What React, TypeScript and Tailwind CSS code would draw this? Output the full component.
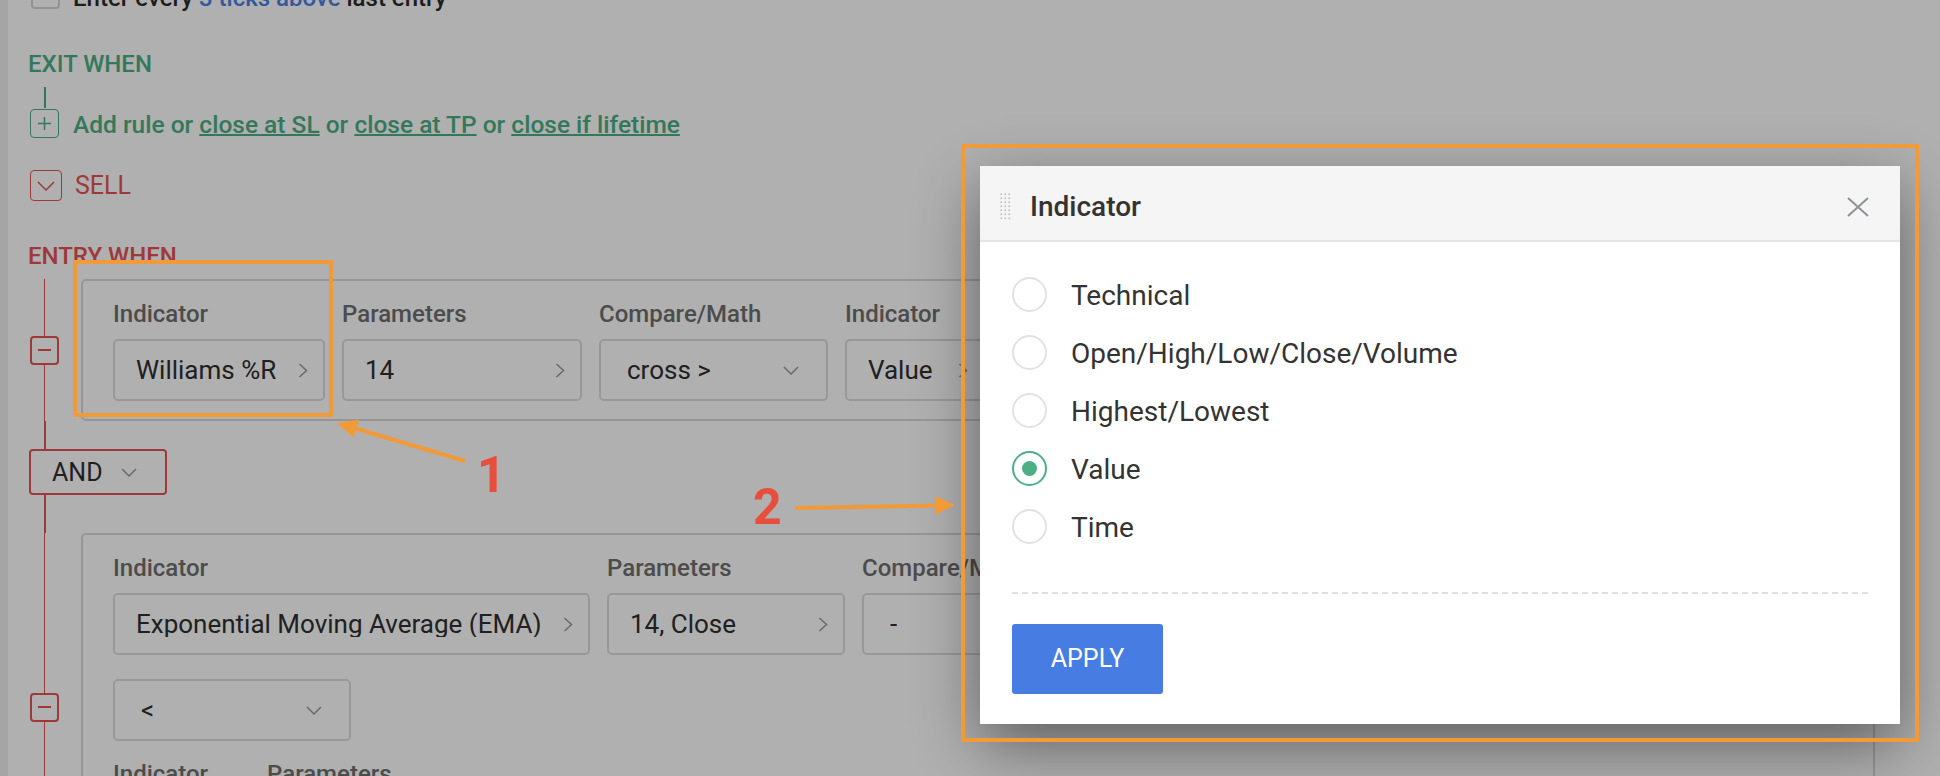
import React from "react";

type FieldProps = {
  label?: string;
  value: string;
  width: string;
  select?: boolean;
};

function ChevronRight() {
  return (
    <svg width="10" height="15" viewBox="0 0 10 15" fill="none">
      <path d="M1.5 1 8.5 7.5 1.5 14" stroke="#9a9a9a" strokeWidth="1.5" />
    </svg>
  );
}

function ChevronDown({ color = "#9a9a9a" }: { color?: string }) {
  return (
    <svg width="16" height="9" viewBox="0 0 16 9" fill="none">
      <path d="M1 1 8 8 15 1" stroke={color} strokeWidth="1.5" />
    </svg>
  );
}

function Field({ label, value, width, select }: FieldProps) {
  return (
    <div className={`flex flex-col ${width}`}>
      {label && (
        <span className="text-[24px] font-medium leading-[28px] text-[#6f6f6f]">
          {label}
        </span>
      )}
      <div
        className={`flex h-[62px] items-center justify-between rounded-[5px] border-2 border-[#dcdcdc] bg-white ${
          label ? "mt-[11px]" : ""
        } ${select ? "pl-[26px] pr-[27px]" : "pl-[21px] pr-[15px]"}`}
      >
        <span className="truncate text-[26px] leading-none text-[#2f2f2f]">{value}</span>
        {select ? <ChevronDown /> : <ChevronRight />}
      </div>
    </div>
  );
}

function MinusBox() {
  return (
    <div className="flex h-[29px] w-[29px] shrink-0 items-center justify-center rounded-[4px] border-2 border-[#e55353] bg-white">
      <div className="h-[2px] w-[13px] bg-[#e55353]" />
    </div>
  );
}

function Rail() {
  return (
    <div className="flex w-[29px] shrink-0 flex-col items-center">
      <div className="w-[1.5px] flex-1 bg-[#e55353]" />
      <MinusBox />
      <div className="w-[1.5px] flex-1 bg-[#e55353]" />
    </div>
  );
}

const options = [
  "Technical",
  "Open/High/Low/Close/Volume",
  "Highest/Lowest",
  "Value",
  "Time",
];

function Modal() {
  return (
    <div className="absolute left-[980px] top-[166px] w-[920px] bg-white shadow-[0_22px_60px_rgba(0,0,0,0.45)]">
      <div className="flex h-[76px] items-center border-b-2 border-[#e4e4e4] bg-[#f5f5f5] pl-[20px] pr-[31px] pt-[8px]">
        <svg width="12" height="28" viewBox="0 0 12 28">
          {[0, 1, 2].map((c) =>
            [0, 1, 2, 3, 4, 5, 6].map((r) => (
              <rect
                key={`${c}-${r}`}
                x={c * 4 + 0.5}
                y={r * 4 + 0.5}
                width="1.6"
                height="1.6"
                fill="#bdbdbd"
              />
            ))
          )}
        </svg>
        <h2 className="ml-[18px] flex-1 text-[28px] font-medium leading-none text-[#333]">
          Indicator
        </h2>
        <svg width="22" height="20" viewBox="0 0 22 20" fill="none">
          <path d="M1 1 21 19M21 1 1 19" stroke="#8d9399" strokeWidth="2" />
        </svg>
      </div>

      <div className="px-[32px] pb-[30px] pt-[23px]">
        {options.map((o) => {
          const on = o === "Value";
          return (
            <label key={o} className="flex h-[58px] items-center gap-[24px]">
              <span
                className={`flex h-[35px] w-[35px] items-center justify-center rounded-full border-2 ${
                  on ? "border-[#4caf85]" : "border-[#e2e2e2]"
                }`}
              >
                {on && <span className="h-[15px] w-[15px] rounded-full bg-[#4caf85]" />}
              </span>
              <span className="mt-[4px] text-[28px] leading-none text-[#333]">{o}</span>
            </label>
          );
        })}

        <div className="mt-[37px] border-t-2 border-dashed border-[#dde0e4]" />

        <button className="mt-[30px] h-[70px] w-[151px] rounded-[3px] bg-[#477de2] text-[25px] text-white">
          APPLY
        </button>
      </div>
    </div>
  );
}

function Annotations() {
  return (
    <>
      <svg
        className="pointer-events-none absolute left-0 top-0"
        width="1940"
        height="776"
        fill="none"
      >
        <rect x="75" y="262" width="256" height="153" stroke="#f39a38" strokeWidth="4" />
        <rect x="963" y="146" width="954" height="594" stroke="#f39a38" strokeWidth="4" />
        <line x1="465" y1="461" x2="354" y2="428" stroke="#f39a38" strokeWidth="4" />
        <polygon points="337,423 358.9,419.6 353.5,437.8" fill="#f39a38" />
        <line x1="795" y1="508" x2="937" y2="505.5" stroke="#f39a38" strokeWidth="4" />
        <polygon points="955,505 935,496 935,515" fill="#f39a38" />
      </svg>
      <span className="absolute left-[477px] top-[450px] text-[50px] font-bold leading-none text-[#e84e3c]">
        1
      </span>
      <span className="absolute left-[753px] top-[482px] text-[50px] font-bold leading-none text-[#e84e3c]">
        2
      </span>
    </>
  );
}

export default function App() {
  return (
    <div className="relative h-[776px] w-full overflow-hidden bg-white font-['Roboto',sans-serif]">
      <div className="flex h-full">
        <div className="w-2 shrink-0 bg-[#f0f0f0]" />
        <div className="flex-1 pl-[22px] pr-[65px]">
          {/* re-entry row, cut at the top */}
          <div className="-mt-[20px] flex items-start gap-[13px]">
            <div className="ml-px h-[29px] w-[29px] rounded-[4px] border-2 border-[#d6d6d6] bg-white" />
            <p className="mt-[4px] text-[24px] font-medium leading-[29px] text-[#2b2b2b]">
              Enter every <span className="text-[#4a80e6]">3 ticks above</span> last entry
            </p>
          </div>

          {/* Exit */}
          <h3 className="-ml-[2px] mt-[37px] text-[24px] font-medium leading-[28px] text-[#4caf85]">
            EXIT WHEN
          </h3>
          <div className="ml-[14px] mt-[9px] h-[21px] w-[1.5px] bg-[#4caf85]" />
          <div className="flex items-center gap-[14px]">
            <div className="flex h-[29px] w-[29px] items-center justify-center rounded-[4px] border-[1.5px] border-[#4caf85]">
              <svg width="13" height="13" viewBox="0 0 13 13">
                <path d="M6.5 0v13M0 6.5h13" stroke="#4caf85" strokeWidth="1.5" />
              </svg>
            </div>
            <p className="mt-[2px] text-[24.5px] font-medium leading-[29px] text-[#4caf85]">
              Add rule or <span className="underline decoration-2">close at SL</span> or{" "}
              <span className="underline decoration-2">close at TP</span> or{" "}
              <span className="underline decoration-2">close if lifetime</span>
            </p>
          </div>

          {/* Sell */}
          <div className="mt-[31px] flex items-center gap-[13px]">
            <div className="flex h-[31px] w-[32px] items-center justify-center rounded-[4px] border-[1.5px] border-[#e55353]">
              <svg width="18" height="10" viewBox="0 0 18 10" fill="none">
                <path d="M1 1 9 9 17 1" stroke="#e55353" strokeWidth="1.5" />
              </svg>
            </div>
            <span className="text-[25px] leading-[31px] text-[#e55353]">SELL</span>
          </div>

          <h3 className="-ml-[2px] mt-[41px] text-[24px] font-medium leading-[28px] text-[#e55353]">
            ENTRY WHEN
          </h3>

          <div className="mt-[9px]">
            <div className="flex">
              <Rail />
              <div className="ml-[22px] flex-1 rounded-[5px] border-2 border-[#d9d9d9] bg-white pb-[18px] pl-[30px] pt-[19px]">
                <div className="flex gap-[17px]">
                  <Field label="Indicator" value="Williams %R" width="w-[212px]" />
                  <Field label="Parameters" value="14" width="w-[240px]" />
                  <Field label="Compare/Math" value="cross >" width="w-[229px]" select />
                  <Field label="Indicator" value="Value" width="w-[140px]" />
                </div>
              </div>
            </div>

            <div className="ml-[14px] h-[28px] w-[1.5px] bg-[#e55353]" />
            <div className="-ml-px flex h-[46px] w-[138px] items-center justify-between rounded-[4px] border-2 border-[#e55353] bg-white pl-[21px] pr-[28px]">
              <span className="text-[25px] leading-none text-[#2f2f2f]">AND</span>
              <ChevronDown />
            </div>
            <div className="ml-[14px] h-[38px] w-[1.5px] bg-[#e55353]" />

            <div className="flex">
              <Rail />
              <div className="ml-[22px] flex-1 rounded-[5px] border-2 border-[#d9d9d9] bg-white pb-[18px] pl-[30px] pt-[19px]">
                <div className="flex gap-[17px]">
                  <Field
                    label="Indicator"
                    value="Exponential Moving Average (EMA)"
                    width="w-[477px]"
                  />
                  <Field label="Parameters" value="14, Close" width="w-[238px]" />
                  <Field label="Compare/Math" value="-" width="w-[229px]" select />
                </div>
                <div className="mt-[24px] flex">
                  <Field value="<" width="w-[238px]" select />
                </div>
                <div className="mt-[19px] flex gap-[17px]">
                  <Field label="Indicator" value="Value" width="w-[137px]" />
                  <Field label="Parameters" value="0" width="w-[200px]" />
                </div>
              </div>
            </div>
          </div>
        </div>
      </div>

      <div className="absolute inset-0 bg-black/[0.31]" />
      <Modal />
      <Annotations />
    </div>
  );
}
